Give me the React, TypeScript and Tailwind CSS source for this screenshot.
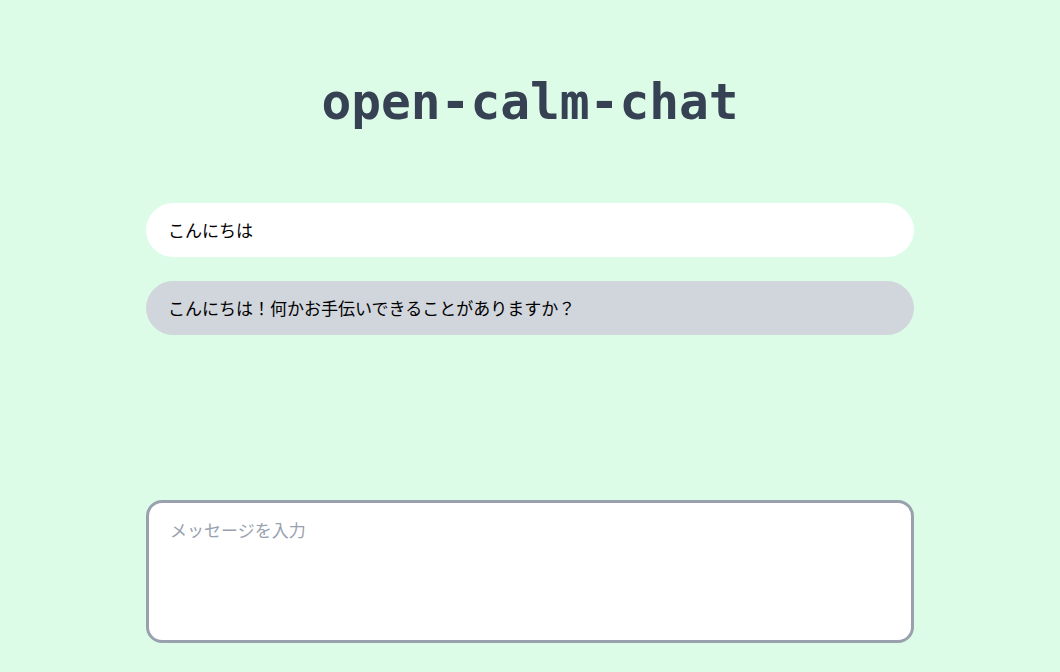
const messages = [
  { role: "user", text: "こんにちは" },
  { role: "assistant", text: "こんにちは！何かお手伝いできることがありますか？" },
];

export default function App() {
  return (
    <div
      className="flex h-screen flex-col items-center bg-[#dcfce7] px-4"
      style={{ fontFamily: '"Noto Sans CJK JP", "Noto Sans", sans-serif' }}
    >
      <h1 className="mt-[75px] font-['DejaVu_Sans_Mono',monospace] text-[49.5px] font-bold leading-[54px] text-gray-700">
        open-calm-chat
      </h1>
      <div className="mt-[74px] flex w-full max-w-3xl flex-1 flex-col gap-6">
        {messages.map((m, i) => (
          <div
            key={i}
            className={`rounded-full px-[22px] py-[13px] text-[17px] leading-7 text-black ${
              m.role === "user" ? "bg-white" : "bg-gray-300"
            }`}
          >
            {m.text}
          </div>
        ))}
      </div>
      <textarea
        className="mb-[29px] h-[143px] w-full max-w-3xl resize-none rounded-2xl border-[3px] border-gray-400 bg-white px-[21px] py-[14px] text-[17px] text-black outline-none placeholder:text-gray-400"
        placeholder="メッセージを入力"
      />
    </div>
  );
}
